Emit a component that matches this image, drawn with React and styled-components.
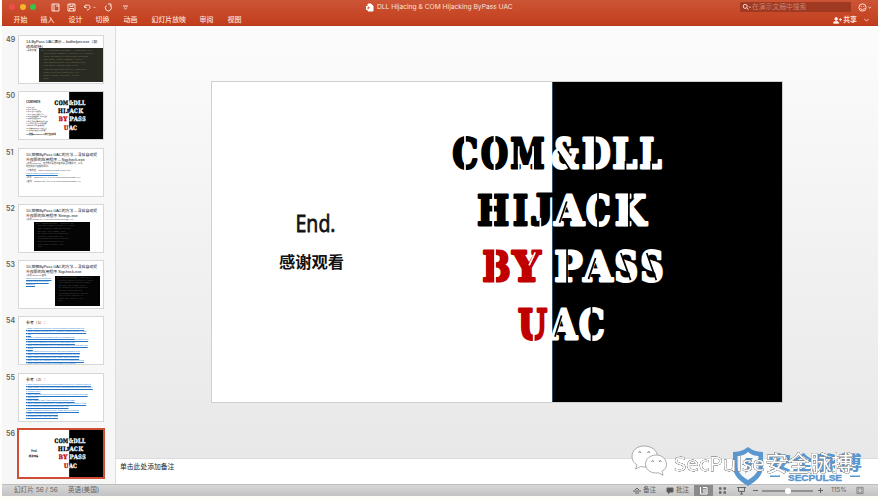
import React from "react";
import styled, { createGlobalStyle } from "styled-components";

const sans = `"Liberation Sans", "Noto Sans CJK SC", sans-serif`;

const GlobalStyle = createGlobalStyle`
  * { box-sizing: border-box; }
  body { margin: 0; background: #fffffa; font-family: ${sans}; overflow: hidden; }
`;

const Window = styled.div`
  position: relative;
  width: 876px;
  height: 496px;
  margin-left: 2px;
  display: flex;
  flex-direction: column;
  background: #f7f7f7;
`;

/* ---------- title bar ---------- */
const Header = styled.header`
  height: 26px;
  flex: none;
  color: #fbe0d8;
  background: linear-gradient(#cc5535, #c23d1c);
  border-bottom: 1px solid #b5391c;
`;
const TitleRow = styled.div`
  height: 14px;
  display: grid;
  grid-template-columns: 364px 1fr 138px;
  align-items: center;
`;
const Tools = styled.div`
  display: flex;
  align-items: center;
  padding-left: 7px;
`;
const Light = styled.i`
  width: 6px;
  height: 6px;
  border-radius: 50%;
  margin-right: 4.5px;
  background: ${(p) => p.$color};
`;
const Glyph = styled.svg`
  width: ${(p) => p.$w || 9}px;
  height: ${(p) => p.$h || 9}px;
  margin-left: ${(p) => p.$gap || 0}px;
  flex: none;
  fill: none;
  stroke: currentColor;
  stroke-width: 1;
`;
const DocTitle = styled.div`
  display: flex;
  align-items: center;
  gap: 3px;
  padding-top: 1px;
  font: 6.68px/13px Inter, ${sans};
  white-space: nowrap;
`;
const SearchArea = styled.div`
  display: flex;
  align-items: center;
`;
const Search = styled.div`
  width: 111px;
  height: 10px;
  display: flex;
  align-items: center;
  gap: 1px;
  padding-left: 2px;
  border-radius: 1px;
  background: #9f3921;
  font: 6.8px/10px ${sans};
  span { color: #cc8270; }
`;
const MenuRow = styled.nav`
  height: 12px;
  display: flex;
  align-items: center;
  padding: 0 8px 0 11.5px;
  font: 500 6.9px/12px ${sans};
`;
const MenuItem = styled.span`
  width: ${(p) => p.$w}px;
  white-space: nowrap;
`;
const Share = styled.span`
  margin-left: auto;
  display: flex;
  align-items: center;
  gap: 1px;
  font-weight: 700;
`;

/* ---------- body ---------- */
const Body = styled.div`
  flex: 1;
  min-height: 0;
  display: flex;
`;
const Sidebar = styled.aside`
  width: 114px;
  flex: none;
  overflow: hidden;
  padding-top: 9px;
  background: #f7f7f7;
  border-right: 1px solid #dedede;
`;
const ThumbRow = styled.div`
  height: 56.25px;
  display: grid;
  grid-template-columns: 16px 86px;
  align-items: start;
`;
const Number = styled.span`
  padding-left: 4px;
  font: 600 7px/9px Inter, ${sans};
  color: #606060;
`;
const Thumb = styled.div`
  position: relative;
  width: 86px;
  height: 49px;
  overflow: hidden;
  background: #fff;
  border: 1px solid #d7d7d7;
  ${(p) => p.$active && `width: 88px; height: 51px; margin: -1px 0 0 -1px; border: 2px solid #cf4d35;`}
`;
const ThumbText = styled.div`
  padding: 3px 5px 0 7px;
`;
const ThumbTitle = styled.div`
  font: 3.9px/5px ${sans};
  color: #111;
  white-space: pre;
`;
const Line = styled.div`
  margin-top: ${(p) => p.$gap || 0}px;
  font: 2.2px/2.9px ${sans};
  color: ${(p) => (p.$link ? "#2474c6" : "#444")};
  text-decoration: ${(p) => (p.$link ? "underline" : "none")};
  text-decoration-thickness: 0.5px;
  white-space: nowrap;
`;
const Terminal = styled.div`
  position: absolute;
  left: ${(p) => p.$x}px;
  top: ${(p) => p.$y}px;
  width: ${(p) => p.$w}px;
  height: ${(p) => p.$h}px;
  padding: 1px 2px;
  background: ${(p) => p.$bg || "#040404"};
  color: ${(p) => p.$fg || "#555"};
  font: ${(p) => p.$size || 1.6}px/${(p) => p.$lead || 2.6}px "Liberation Mono", monospace;
  white-space: pre;
`;
const Workspace = styled.main`
  flex: 1;
  min-width: 0;
  display: flex;
  flex-direction: column;
`;
const Stage = styled.section`
  height: 432px;
  padding: 55px 0 0 95px;
  background: linear-gradient(#fcfcfc, #f3f3f3 45%, #e8e8e8);
`;
const Slide = styled.div`
  width: 572px;
  height: 322px;
  border: 1px solid #d0d0d0;
  background: #fff;
`;
const Art = styled.svg`
  display: block;
  width: 100%;
  height: 100%;
`;
const Notes = styled.section`
  flex: 1;
  padding: 3px 4px;
  background: #fff;
  border-top: 1px solid #dcdcdc;
  color: #222;
  font: 6.8px/10px ${sans};
`;

/* ---------- status bar ---------- */
const Status = styled.footer`
  height: 12px;
  flex: none;
  display: flex;
  align-items: center;
  padding-left: 12px;
  color: #626262;
  background: linear-gradient(#d7d7d7, #c3c3c3);
  border-top: 1px solid #bdbdbd;
  font: 6.6px/11px Inter, ${sans};
`;
const StatusItem = styled.span`
  width: ${(p) => p.$w}px;
  padding-left: ${(p) => p.$pad || 0}px;
  display: flex;
  align-items: center;
  gap: 2px;
  flex: none;
  white-space: nowrap;
`;
const Controls = styled.div`
  width: 245px;
  margin-left: auto;
  display: flex;
  align-items: center;
`;
const ViewButton = styled.span`
  width: 19px;
  height: 11px;
  flex: none;
  display: grid;
  place-items: center;
  color: ${(p) => (p.$on ? "#fff" : "#666")};
  background: ${(p) => (p.$on ? "#8b8b8b" : "transparent")};
`;
const Track = styled.span`
  width: 51px;
  height: 2px;
  flex: none;
  margin: 0 5px 0 4px;
  background: #929292;
  display: flex;
  align-items: center;
  justify-content: center;
  &::after {
    content: "";
    width: 6px;
    height: 6px;
    flex: none;
    border-radius: 50%;
    background: #fff;
  }
`;

/* ---------- watermark over the window corner ---------- */
const Watermark = styled.div`
  position: absolute;
  left: 628px;
  top: 442px;
  width: 236px;
  height: 46px;
`;
const Shadowed = styled.g`
  filter: drop-shadow(0.8px 0.8px 0 #3c3c3c) drop-shadow(0.3px 0.3px 0.2px #3c3c3c);
`;

const cap = 32.6;
/* [glyph, left, right, colour, cuts]; a cut is [x1, y1, x2, y2] in fractions of the glyph box */
const K = "#000", W = "#fff", R = "#c00000";
const mid = [[0.5, -0.05, 0.5, 1.05]];
const stem = [[0.45, -0.05, 0.45, 1.05]];
const curve = [[0.49, -0.05, 0.49, 0.3], [0.49, 0.7, 0.49, 1.05]];
const aCut = [[0.18, 0.9, 0.42, 0.25]];
const sCut = [[0.28, 0.1, 0.68, 0.93]];
const elCut = [[0.53, 0.75, 0.53, 1.05]];
const rows = [
  [136.5, [["C", 452, 478.5, K, curve], ["O", 480.5, 508.5, K, mid], ["M", 510, 545, K, [[0.25, 0.3, 0.25, 1.05], [0.66, 0.3, 0.66, 1.05]]], ["&", 551, 579, W, [[0.25, 0.45, 0.7, 1.04]]], ["D", 581.5, 611, W, stem], ["L", 612, 637.5, W, elCut], ["L", 639, 662, W, elCut]]],
  [193.4, [["H", 476.7, 509.5, K, mid], ["I", 512.5, 528.5, K, []], ["J", 530, 553.5, K, [[0.44, 0.75, 0.44, 1.05]]], ["A", 554, 584.5, W, aCut], ["C", 585.5, 611, W, curve], ["K", 614.5, 646.5, W, stem]]],
  [249.8, [["B", 482, 511, R, stem], ["Y", 512, 541, R, [[0.59, 0.48, 0.8, 0.08]]], ["P", 554, 583, W, stem], ["A", 583, 613, W, aCut], ["S", 614, 638.5, W, sCut], ["S", 640, 664, W, sCut]]],
  [307.3, [["U", 517.5, 547.5, R, [[0.54, 0.75, 0.54, 1.05]]], ["A", 550, 577.5, W, aCut], ["C", 578.5, 605, W, curve]]],
];

function Letter({ y, item }) {
  const [ch, x1, x2, color, cuts] = item;
  const w = x2 - x1;
  const under = x1 >= 549 ? K : W;
  const hook = ch === "J";
  return (
    <g>
      <text x={x1 + 0.5} y={y + cap - 1.3} textLength={w - 1} lengthAdjust="spacingAndGlyphs"
        fontFamily={hook ? '"Liberation Serif", serif' : '"DejaVu Serif", serif'} fontWeight="700"
        fontSize={hook ? 45.5 : 41} fill={color} stroke={color} strokeWidth={hook ? 3.2 : 2.9} strokeLinejoin="round">{ch}</text>
      {cuts.map((c, i) => (
        <line key={i} x1={x1 + c[0] * w} y1={y + c[1] * cap} x2={x1 + c[2] * w} y2={y + c[3] * cap} stroke={under} strokeWidth="1.7" />
      ))}
    </g>
  );
}

const contents = ["1.什么是dll", "2.什么是COM", "3.什么是UAC的等级", "4.什么是DLL劫持及注入", "5.COM劫持原理 - COM组件", "6.挖掘可劫持的DLL", "7.利用系统程序自动提升权限", "8.实现可以绕过UAC的程序", "9.Bypass UAC 原理分析", "10.挖掘Bypass UAC的方法", "11.寻找自动提升权限程序"];

function Lettering({ variant }) {
  return (
    <Art viewBox="212 82 570 320" preserveAspectRatio="none">
      <rect x="552.3" y="82" width="230" height="320" fill="#000" />
      <path d="M552.5 82V402" stroke="#304f66" strokeWidth="1" />
      {rows.map(([y, letters]) => letters.map((item) => <Letter key={item[1] + "-" + y} y={y} item={item} />))}
      {variant === "contents" ? (
        <g fontFamily='"Liberation Sans", "Noto Sans CJK SC", sans-serif' fill="#222">
          <text x="262" y="157" fontSize="22" textLength="94" lengthAdjust="spacingAndGlyphs" stroke="#222">CONTENTS</text>
          {contents.map((t, i) => <text key={t} x="262" y={189 + i * 15.8} fontSize="11.5">{t}</text>)}
          <text x="262" y="373" fontSize="13" fontWeight="700">12.挖掘ByPass UAC的方法及实现</text>
        </g>
      ) : (
        <g fill="#111">
          <text x="295.5" y="232" fontFamily='"Open Sans", sans-serif' fontSize="24.5" textLength="40" lengthAdjust="spacingAndGlyphs" stroke="#111" strokeWidth="0.8">End.</text>
          <text x="279" y="268" fontFamily='"Noto Sans CJK SC", sans-serif' fontSize="16.3" fontWeight="700" textLength="65">感谢观看</text>
        </g>
      )}
    </Art>
  );
}

const code = `PS C:\\Windows\\System32> .\\fodhelper.exe
  Microsoft Windows [Version 10.0.15063]
  HKCU:\\Software\\Classes\\ms-settings
  New-Item -Path command -Force
  Set-ItemProperty DelegateExecute
  reg query autoElevate true
  requestedExecutionLevel asInvoker
  Start-Process fodhelper.exe
  Remove-Item -Recurse -Force
  Done.`;

const refs = [
  "https://www.fuzzysecurity.com/tutorials/27.html/bypass-uac",
  "https://github.com/hfiref0x/UACME/tree/master/Source/Akagi",
  "ods",
  "https://enigma0x3.net/2017/03/14/bypassing-uac",
  "https://msdn.microsoft.com/library/windows/desktop/ms679687",
  "https://cqureacademy.com/cqure-labs/cqlabs-uac",
  "https://docs.microsoft.com/en-us/windows/security/identity/uac",
  "t1088",
  "https://www.codeproject.com/Articles/dll-hijacking-com",
  "https://blogs.technet.com/markrussinovich/uac-tokens",
  "https://3gstudent.github.io/Use-COM-Object-hijacking",
  "https://www.greyhathacker.net/?p=796/elevating-privileges",
  "https://support.microsoft.com/kb/2389418/loading",
];
const more = [
  "https://support.microsoft.com/kb/2389418/secure-loading-libraries",
  "https://www.exploit-db.com/docs/dll-hijacking/windows-search-order",
  "/search-order",
  "https://blog.didierstevens.com/windows-uac/elevation-prompts",
  "windows.cs",
  "https://attack.mitre.org/techniques/T1088/bypass",
  "https://github.com/hfiref0x/UACME/tree/master/Source/Akagi",
  "com-object/elevation/moniker/interface.md",
  "https://3gstudent.github.io/Use-COM-Object-hijacking",
  "https://enigma0x3.net/2017/uac",
  "bypassing-uac-using-app-paths",
];

const method = "10.挖掘ByPass UAC的方法 – 寻找自动提\n升权限的应用程序 – ";

function SlideThumb({ n }) {
  if (n === 50) return <Lettering variant="contents" />;
  if (n === 56) return <Lettering />;
  if (n === 49) return (
    <>
      <ThumbText><ThumbTitle>{"14.ByPass UAC演示 – fodhelper.exe（如\n动态劫持）"}</ThumbTitle><Line>• 具体步骤</Line></ThumbText>
      <Terminal $x={20} $y={12} $w={64} $h={34} $bg="#292b22" $fg="#7a795a" $size={2.2} $lead={3.1}>{code}</Terminal>
    </>
  );
  if (n === 51) return (
    <ThumbText>
      <ThumbTitle>{method + "Sigcheck.exe"}</ThumbTitle>
      <Line $gap={0.6}>• 使用 sigcheck，在微软工具包中查找是否需要提升，以及</Line>
      <Line>找自动提升权限的程序。</Line>
      <Line $gap={1.4}>• 下载地址：https://docs.microsoft.com/en-us/</Line>
      <Line $link>sysinternals/downloads/sigcheck</Line>
      <Line $gap={1}>• 命令：sigcheck.exe -s -m C:\Windows\System32\*.exe</Line>
      <Line $gap={1}>• 查找：autoElevate=true in C:\Windows\System32\*.exe</Line>
    </ThumbText>
  );
  if (n === 52) return (
    <>
      <ThumbText><ThumbTitle>{"10.挖掘ByPass UAC的方法 – 寻找自动提\n升权限的应用程序 Strings.exe"}</ThumbTitle><Line>• 使用 strings.exe -s C:\Windows\System32\*.exe</Line></ThumbText>
      <Terminal $x={15} $y={17} $w={56} $h={29}>{code}</Terminal>
    </>
  );
  if (n === 53) return (
    <>
      <ThumbText><ThumbTitle>{"10.挖掘ByPass UAC的方法 – 寻找自动提\n升权限的应用程序 Sigcheck.exe"}</ThumbTitle><Line>• 使用 Sigcheck 查找</Line>{["https://docs.microsoft.com", "sysinternals/downloads", "/sigcheck"].map((r) => <Line $link key={r}>{r}</Line>)}</ThumbText>
      <Terminal $x={36} $y={15} $w={45} $h={30} $size={1.5}>{code}</Terminal>
    </>
  );
  return (
    <ThumbText>
      <ThumbTitle>{n === 54 ? "参考（1）：" : "参考（2）："}</ThumbTitle>
      <Line $gap={1.6} />
      {(n === 54 ? refs : more).map((r, i) => <Line $link key={r} $gap={n === 55 && i % 3 === 2 ? 0.8 : 0}>• {r}</Line>)}
    </ThumbText>
  );
}

function TitleBar() {
  return (
    <Header>
      <TitleRow>
        <Tools>
          <Light $color="#ef4e48" /><Light $color="#f4b52b" /><Light $color="#35c54a" />
          <Glyph viewBox="0 0 9 9" $gap={10}><path d="M1 1h7v7H1zM3 1v7M5 3h3" /></Glyph>
          <Glyph viewBox="0 0 9 9" $gap={7}><path d="M1 1h7v7H1zM3 1v2.5h3V1M2.5 8V5.5h4V8" /></Glyph>
          <Glyph viewBox="0 0 9 9" $gap={7}><path d="M3 1.5 1 4l3 1M1 4c3-3 6-2 6 0 0 2-2 3-3 3" /></Glyph>
          <Glyph viewBox="0 0 4 4" $w={3} $h={3} $gap={1}><path d="m.5 1 1.5 1.5L3.5 1" /></Glyph>
          <Glyph viewBox="0 0 9 9" $gap={8}><path d="M2.4 2.6a3 3 0 1 0 4 .1M4 1h3v2.7" /></Glyph>
          <Glyph viewBox="0 0 5 5" $w={5} $h={5} $gap={10}><path d="M0 1h5M1 2.6l1.5 1.3L4 2.6" /></Glyph>
        </Tools>
        <DocTitle>
          <Glyph viewBox="0 0 8 9" $w={8}><path d="M2 1h3l2 2v5H2z" fill="#fff" stroke="#fff" /><path d="M0 3h5v4H0z" fill="#fff" stroke="none" /><path d="M2 6.5V4h1.2v1.2H2" stroke="#c54729" strokeWidth=".7" /></Glyph>
          DLL Hijacing &amp; COM Hijacking ByPass UAC
        </DocTitle>
        <SearchArea>
          <Search>
            <Glyph viewBox="0 0 9 8" $w={9} $h={8}><circle cx="3.2" cy="3.4" r="2" /><path d="m4.8 5 1.7 1.7M7 3.5l1 1 1-1" /></Glyph>
            <span>在演示文稿中搜索</span>
          </Search>
          <Glyph viewBox="0 0 14 9" $w={14} $gap={7}><circle cx="4.5" cy="4.5" r="3.6" /><path d="M2.5 5c.7 2 3.3 2 4 0M3.2 3v.9M5.8 3v.9M10.5 4l1.2 1 1.2-1" /></Glyph>
        </SearchArea>
      </TitleRow>
      <MenuRow>
        {[["开始", 27], ["插入", 28], ["设计", 27], ["切换", 28], ["动画", 28], ["幻灯片放映", 48], ["审阅", 28], ["视图", 20]].map(([t, w]) => <MenuItem key={t} $w={w}>{t}</MenuItem>)}
        <Share>
          <Glyph viewBox="0 0 10 8"><circle cx="3.5" cy="2.2" r="1.5" fill="#fff" /><path d="M.5 7c0-3 6-3 6 0z" fill="#fff" /><path d="M6.5 3h3.5M8.2 1.3v3.5" /></Glyph>
          共享
          <Glyph viewBox="0 0 8 6" $w={7} $h={6} $gap={5}><path d="m1.5 2 2.5 2 2.5-2" /></Glyph>
        </Share>
      </MenuRow>
    </Header>
  );
}

function StatusBar() {
  return (
    <Status>
      <StatusItem $w={54}>幻灯片 56 / 56</StatusItem>
      <StatusItem $w={50}>英语(美国)</StatusItem>
      <Controls>
        <StatusItem $w={33}><Glyph viewBox="0 0 8 8" $w={8}><path d="M2 3.5 4 1.5l2 2M0 4.5h8M2 6.5h4" /></Glyph>备注</StatusItem>
        <StatusItem $w={28}><Glyph viewBox="0 0 8 8" $w={8}><path d="M1 1.5h6v4H4L2.5 7V5.5H1z" fill="#555" /></Glyph>批注</StatusItem>
        <ViewButton $on><Glyph viewBox="0 0 9 9"><path d="M1.5 1v7H8V1.5H4M4 4h3M4 6h3" /></Glyph></ViewButton>
        <ViewButton><Glyph viewBox="0 0 9 9"><path d="M1 2.5h2.5M5.5 2.5H8M1 6.5h2.5M5.5 6.5H8" strokeWidth="2.3" /></Glyph></ViewButton>
        <ViewButton><Glyph viewBox="0 0 9 9"><path d="M0 1.5h9M1.5 2v3.5h6V2M4.5 5.5V8M3 8h3" /></Glyph></ViewButton>
        <Glyph viewBox="0 0 5 5" $w={5} $h={5} $gap={2}><path d="M0 2.5h5" /></Glyph>
        <Track />
        <Glyph viewBox="0 0 5 5" $w={5} $h={5}><path d="M0 2.5h5M2.5 0v5" /></Glyph>
        <StatusItem $w={33} $pad={8}>115%</StatusItem>
        <Glyph viewBox="0 0 9 9" $w={8}><path d="M1 1h7v7H1zM2.5 4V2.5H4M5 2.5h1.5V4M6.5 5v1.5H5M4 6.5H2.5V5" strokeWidth=".7" /></Glyph>
      </Controls>
    </Status>
  );
}

function Brand() {
  return (
    <Watermark>
      <Art viewBox="630 442 236 46">
        <g fill="#5a97d0">
          <path d="M748 447c5 4 10 5 15 5v14c0 9-6 15-15 20-9-5-15-11-15-20v-14c5 0 10-1 15-5z" />
          <path d="M748 452c4 3 7 4 10.5 4v10c0 6-4 10-10.5 14-6.5-4-10.5-8-10.5-14v-10c3.500 0 7-1 10.500-4z" fill="#f6f8fa" />
          <path d="M753 458h-7l-4 7h6l-3 9 8-11h-5z" />
          <text x="768" y="469.500" fontFamily='"Noto Sans CJK SC", sans-serif' fontWeight="700" fontSize="19.500" textLength="94" lengthAdjust="spacingAndGlyphs">安全脉搏</text>
          <text x="788" y="480.500" fontFamily='"Liberation Sans", sans-serif' fontWeight="700" fontSize="9.500" stroke="#5a97d0" strokeWidth=".4" textLength="54" lengthAdjust="spacingAndGlyphs">SECPULSE</text>
          <path d="M770 475.500h10v1.500h-10zM850 475.500h10v1.500h-10z" />
        </g>
        <g fill="#fff" stroke="#777" strokeWidth=".6">
          <path d="M644 446c-7 0-12 4.500-12 10.500 0 4 2 6.500 5 8.500l-1.500 4 5-2.500c9 2 17-2 17-10 0-6-6-10.500-13.500-10.500z" />
          <path d="M656.500 455c-6.500 0-11 4-11 9.300 0 5.500 6 9.700 13 8.500l4.500 2.500-1-4c3-1.500 4.500-4 4.500-7 0-5-4.500-9.300-10-9.300z" />
        </g>
        <path d="M638.500 452.500q1.300-1.600 2.600 0M647.500 452.500q1.300-1.600 2.600 0M651.500 461.500q1.200-1.500 2.400 0M659 461.500q1.200-1.500 2.400 0" fill="none" stroke="#555" strokeWidth=".9" />
        <Shadowed fill="#fff" stroke="#fff" strokeWidth=".3" fontFamily='"Open Sans", "Noto Sans CJK SC", sans-serif'>
          <text x="674" y="470.500" fontSize="20.500" textLength="91" lengthAdjust="spacingAndGlyphs">SecPulse</text>
          <text x="765.500" y="470.500" fontSize="22" textLength="88">安全脉搏</text>
        </Shadowed>
      </Art>
    </Watermark>
  );
}

export default function App() {
  return (
    <>
      <GlobalStyle />
      <Window>
        <TitleBar />
        <Body>
          <Sidebar>
            {[49, 50, 51, 52, 53, 54, 55, 56].map((n) => (
              <ThumbRow key={n}>
                <Number>{n}</Number>
                <Thumb $active={n === 56}><SlideThumb n={n} /></Thumb>
              </ThumbRow>
            ))}
          </Sidebar>
          <Workspace>
            <Stage><Slide><Lettering /></Slide></Stage>
            <Notes>单击此处添加备注</Notes>
          </Workspace>
        </Body>
        <StatusBar />
        <Brand />
      </Window>
    </>
  );
}
